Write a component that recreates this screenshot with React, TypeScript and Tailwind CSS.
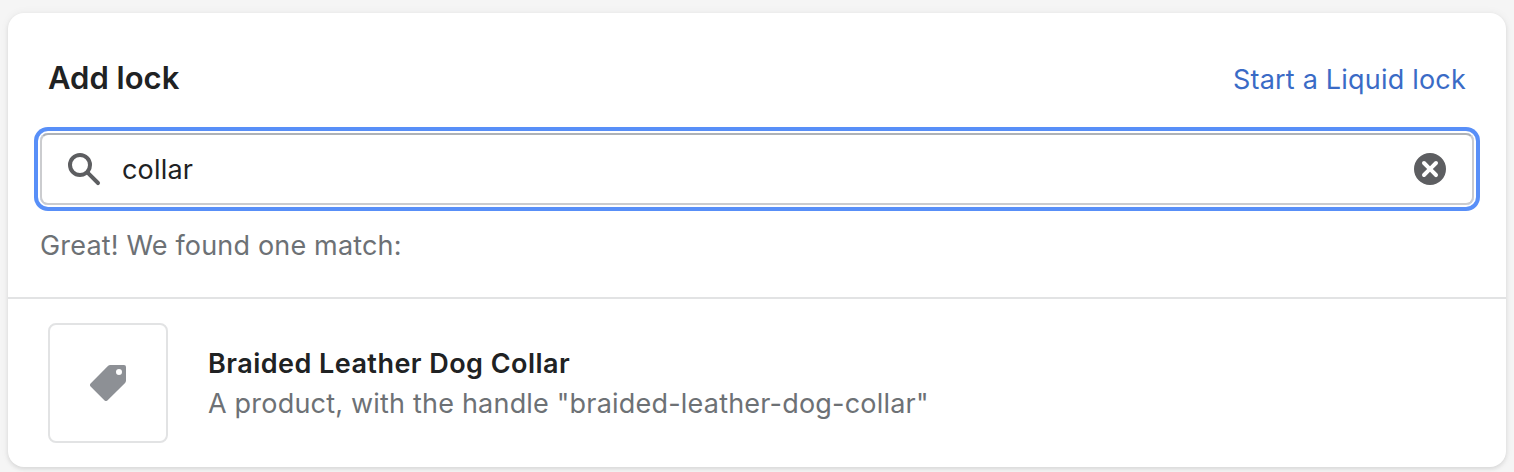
import React, { useState } from "react";

function SearchIcon() {
  return (
    <svg viewBox="0 0 20 20" className="h-10 w-10 shrink-0 fill-[#5d5e61]">
      <path d="M8 12a4 4 0 1 1 0-8 4 4 0 0 1 0 8zm9.707 4.293l-4.82-4.82A5.968 5.968 0 0 0 14 8 6 6 0 0 0 2 8a6 6 0 0 0 6 6 5.968 5.968 0 0 0 3.473-1.113l4.82 4.82a.997.997 0 0 0 1.414 0 .999.999 0 0 0 0-1.414z" />
    </svg>
  );
}

function ClearIcon() {
  return (
    <svg viewBox="0 0 20 20" className="h-10 w-10 fill-[#5d5e61]">
      <path d="M11.414 10l2.293-2.293a.999.999 0 1 0-1.414-1.414L10 8.586 7.707 6.293a.999.999 0 1 0-1.414 1.414L8.586 10l-2.293 2.293a.999.999 0 1 0 1.414 1.414L10 11.414l2.293 2.293a.997.997 0 0 0 1.414 0 .999.999 0 0 0 0-1.414L11.414 10zM10 18a8 8 0 1 1 0-16 8 8 0 0 1 0 16z" />
    </svg>
  );
}

function TagIcon() {
  return (
    <svg viewBox="0 0 36 36" className="h-9 w-9 fill-[#8d9095]">
      <path
        fillRule="evenodd"
        d="M20.5 0H34a2 2 0 0 1 2 2v13.500a4 4 0 0 1-1.170 2.830L17.400 35.400a2 2 0 0 1-2.830 0L.6 21.400a2 2 0 0 1 0-2.830L17.670 1.170A4 4 0 0 1 20.500 0zM29 10a3 3 0 1 0 0-6 3 3 0 0 0 0 6z"
      />
    </svg>
  );
}

export default function App() {
  const [query, setQuery] = useState("collar");
  return (
    <div className="h-[472px] overflow-hidden bg-[#f5f5f5] px-2 pt-[13px] font-['Inter',sans-serif] text-[27px] leading-10 text-[#202223]">
      <section className="h-[454px] rounded-2xl bg-white shadow-[0_2px_4px_rgba(0,0,0,0.1),0_0_10px_rgba(23,24,24,0.05)]">
        <div className="h-[286px] border-b-2 border-[#e2e3e4] px-8">
          <header className="flex h-[120px] items-center justify-between px-2 pt-3">
            <h2 className="pb-0.5 text-[31px] font-semibold">Add lock</h2>
            <a href="#" className="pt-px tracking-[0.2px] text-[#3a6bc6]">Start a Liquid lock</a>
          </header>
          <div className="flex h-[72px] items-center rounded-lg border-2 border-[#cbcccf] border-t-[#aeb2b7] px-[22px] ring-4 ring-[#588ff8] ring-offset-2 ring-offset-white">
            <SearchIcon />
            <input
              className="ml-[18px] h-10 min-w-0 flex-1 bg-transparent pt-0.5 tracking-[0.2px] outline-none"
              value={query}
              onChange={(e) => setQuery(e.target.value)}
            />
            <button aria-label="Clear" onClick={() => setQuery("")}>
              <ClearIcon />
            </button>
          </div>
          <p className="mt-[21px] tracking-[0.17px] text-[#6d7175]">Great! We found one match:</p>
        </div>
        <div className="flex items-center gap-10 px-10 pt-6">
          <div className="flex h-[120px] w-[120px] items-center justify-center rounded-lg border-2 border-[#e2e3e4]">
            <TagIcon />
          </div>
          <div className="pt-0.5">
            <h3 className="font-semibold tracking-[0.46px]">Braided Leather Dog Collar</h3>
            <p className="tracking-[0.2px] text-[#6d7175]">A product, with the handle "braided-leather-dog-collar"</p>
          </div>
        </div>
      </section>
    </div>
  );
}
